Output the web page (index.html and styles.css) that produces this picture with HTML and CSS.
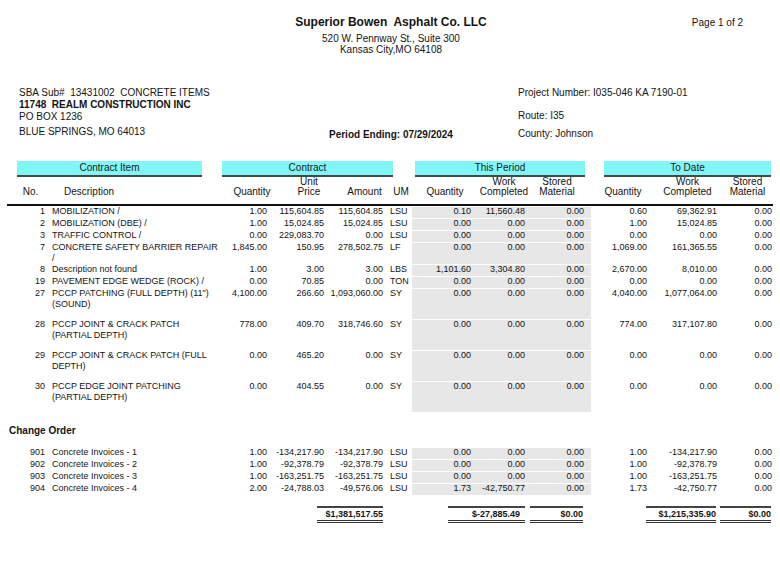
FILE: index.html
```html
<!DOCTYPE html>
<html>
<head>
<meta charset="utf-8">
<link rel="stylesheet" href="styles.css">
</head>
<body>
<div class="page">
  <header class="top">
    <div class="company">
      <div class="company-name">Superior Bowen  Asphalt Co. LLC</div>
      <div class="company-addr">520 W. Pennway St., Suite 300</div>
      <div class="company-addr">Kansas City,MO 64108</div>
    </div>
    <div class="page-num">Page 1 of 2</div>
  </header>

  <section class="info">
    <div class="sub">
      <div class="pre">SBA Sub#  13431002  CONCRETE ITEMS</div>
      <div class="pre bold">11748  REALM CONSTRUCTION INC</div>
      <div>PO BOX 1236</div>
      <div class="city">BLUE SPRINGS, MO 64013</div>
    </div>
    <div class="period">Period Ending: 07/29/2024</div>
    <div class="proj">
      <div>Project Number: I035-046 KA 7190-01</div>
      <div class="route">Route: I35</div>
      <div class="county">County: Johnson</div>
    </div>
  </section>

  <div class="bands">
    <div class="band band-item">Contract Item</div>
    <div class="band band-contract">Contract</div>
    <div class="band band-period">This Period</div>
    <div class="band band-todate">To Date</div>
  </div>

  <table class="grid">
    <colgroup>
      <col class="w-no"><col class="w-desc"><col class="w-qty"><col class="w-unit"><col class="w-amt"><col class="w-um">
      <col class="w-tpq"><col class="w-tpw"><col class="w-tps"><col class="w-tdq"><col class="w-tdw"><col class="w-tds">
    </colgroup>
    <thead>
      <tr>
        <th class="h-no">No.</th>
        <th class="h-desc">Description</th>
        <th class="h-qty">Quantity</th>
        <th class="h-unit">Unit<br>Price</th>
        <th class="h-amt">Amount</th>
        <th class="h-um">UM</th>
        <th class="h-tpq">Quantity</th>
        <th class="h-tpw">Work<br>Completed</th>
        <th class="h-tps">Stored<br>Material</th>
        <th class="h-tdq">Quantity</th>
        <th class="h-tdw">Work<br>Completed</th>
        <th class="h-tds">Stored<br>Material</th>
      </tr>
    </thead>
    <tbody>
      <tr class="r1"><td class="no">1</td><td class="desc">MOBILIZATION /</td><td class="qty">1.00</td><td class="unit">115,604.85</td><td class="amt">115,604.85</td><td class="um">LSU</td><td class="tp tpq">0.10</td><td class="tp tpw">11,560.48</td><td class="tp tps">0.00</td><td class="tdq">0.60</td><td class="tdw">69,362.91</td><td class="tds">0.00</td></tr>
      <tr class="r1"><td class="no">2</td><td class="desc">MOBILIZATION (DBE) /</td><td class="qty">1.00</td><td class="unit">15,024.85</td><td class="amt">15,024.85</td><td class="um">LSU</td><td class="tp tpq">0.00</td><td class="tp tpw">0.00</td><td class="tp tps">0.00</td><td class="tdq">1.00</td><td class="tdw">15,024.85</td><td class="tds">0.00</td></tr>
      <tr class="r1"><td class="no">3</td><td class="desc">TRAFFIC CONTROL /</td><td class="qty">0.00</td><td class="unit">229,083.70</td><td class="amt">0.00</td><td class="um">LSU</td><td class="tp tpq">0.00</td><td class="tp tpw">0.00</td><td class="tp tps">0.00</td><td class="tdq">0.00</td><td class="tdw">0.00</td><td class="tds">0.00</td></tr>
      <tr class="r2"><td class="no">7</td><td class="desc">CONCRETE SAFETY BARRIER REPAIR<br>/</td><td class="qty">1,845.00</td><td class="unit">150.95</td><td class="amt">278,502.75</td><td class="um">LF</td><td class="tp tpq">0.00</td><td class="tp tpw">0.00</td><td class="tp tps">0.00</td><td class="tdq">1,069.00</td><td class="tdw">161,365.55</td><td class="tds">0.00</td></tr>
      <tr class="r1"><td class="no">8</td><td class="desc">Description not found</td><td class="qty">1.00</td><td class="unit">3.00</td><td class="amt">3.00</td><td class="um">LBS</td><td class="tp tpq">1,101.60</td><td class="tp tpw">3,304.80</td><td class="tp tps">0.00</td><td class="tdq">2,670.00</td><td class="tdw">8,010.00</td><td class="tds">0.00</td></tr>
      <tr class="r1"><td class="no">19</td><td class="desc">PAVEMENT EDGE WEDGE (ROCK) /</td><td class="qty">0.00</td><td class="unit">70.85</td><td class="amt">0.00</td><td class="um">TON</td><td class="tp tpq">0.00</td><td class="tp tpw">0.00</td><td class="tp tps">0.00</td><td class="tdq">0.00</td><td class="tdw">0.00</td><td class="tds">0.00</td></tr>
      <tr class="r3"><td class="no">27</td><td class="desc">PCCP PATCHING (FULL DEPTH) (11")<br>(SOUND)</td><td class="qty">4,100.00</td><td class="unit">266.60</td><td class="amt">1,093,060.00</td><td class="um">SY</td><td class="tp tpq">0.00</td><td class="tp tpw">0.00</td><td class="tp tps">0.00</td><td class="tdq">4,040.00</td><td class="tdw">1,077,064.00</td><td class="tds">0.00</td></tr>
      <tr class="r3"><td class="no">28</td><td class="desc">PCCP JOINT &amp; CRACK PATCH<br>(PARTIAL DEPTH)</td><td class="qty">778.00</td><td class="unit">409.70</td><td class="amt">318,746.60</td><td class="um">SY</td><td class="tp tpq">0.00</td><td class="tp tpw">0.00</td><td class="tp tps">0.00</td><td class="tdq">774.00</td><td class="tdw">317,107.80</td><td class="tds">0.00</td></tr>
      <tr class="r3"><td class="no">29</td><td class="desc">PCCP JOINT &amp; CRACK PATCH (FULL<br>DEPTH)</td><td class="qty">0.00</td><td class="unit">465.20</td><td class="amt">0.00</td><td class="um">SY</td><td class="tp tpq">0.00</td><td class="tp tpw">0.00</td><td class="tp tps">0.00</td><td class="tdq">0.00</td><td class="tdw">0.00</td><td class="tds">0.00</td></tr>
      <tr class="r3"><td class="no">30</td><td class="desc">PCCP EDGE JOINT PATCHING<br>(PARTIAL DEPTH)</td><td class="qty">0.00</td><td class="unit">404.55</td><td class="amt">0.00</td><td class="um">SY</td><td class="tp tpq">0.00</td><td class="tp tpw">0.00</td><td class="tp tps">0.00</td><td class="tdq">0.00</td><td class="tdw">0.00</td><td class="tds">0.00</td></tr>
      <tr class="section"><td colspan="12" class="section-title">Change Order</td></tr>
      <tr class="r1"><td class="no">901</td><td class="desc">Concrete Invoices - 1</td><td class="qty">1.00</td><td class="unit">-134,217.90</td><td class="amt">-134,217.90</td><td class="um">LSU</td><td class="tp tpq">0.00</td><td class="tp tpw">0.00</td><td class="tp tps">0.00</td><td class="tdq">1.00</td><td class="tdw">-134,217.90</td><td class="tds">0.00</td></tr>
      <tr class="r1"><td class="no">902</td><td class="desc">Concrete Invoices - 2</td><td class="qty">1.00</td><td class="unit">-92,378.79</td><td class="amt">-92,378.79</td><td class="um">LSU</td><td class="tp tpq">0.00</td><td class="tp tpw">0.00</td><td class="tp tps">0.00</td><td class="tdq">1.00</td><td class="tdw">-92,378.79</td><td class="tds">0.00</td></tr>
      <tr class="r1"><td class="no">903</td><td class="desc">Concrete Invoices - 3</td><td class="qty">1.00</td><td class="unit">-163,251.75</td><td class="amt">-163,251.75</td><td class="um">LSU</td><td class="tp tpq">0.00</td><td class="tp tpw">0.00</td><td class="tp tps">0.00</td><td class="tdq">1.00</td><td class="tdw">-163,251.75</td><td class="tds">0.00</td></tr>
      <tr class="r1"><td class="no">904</td><td class="desc">Concrete Invoices - 4</td><td class="qty">2.00</td><td class="unit">-24,788.03</td><td class="amt">-49,576.06</td><td class="um">LSU</td><td class="tp tpq">1.73</td><td class="tp tpw">-42,750.77</td><td class="tp tps">0.00</td><td class="tdq">1.73</td><td class="tdw">-42,750.77</td><td class="tds">0.00</td></tr>
      <tr class="totals">
        <td colspan="3"></td>
        <td colspan="2" class="t-amt"><span class="tot tot-amt">$1,381,517.55</span></td>
        <td></td>
        <td colspan="2" class="t-tpw"><span class="tot tot-tpw">$-27,885.49</span></td>
        <td class="t-tps"><span class="tot tot-tps">$0.00</span></td>
        <td colspan="2" class="t-tdw"><span class="tot tot-tdw">$1,215,335.90</span></td>
        <td class="t-tds"><span class="tot tot-tds">$0.00</span></td>
      </tr>
    </tbody>
  </table>
</div>
</body>
</html>
```
FILE: styles.css
```css
body {
  margin: 0;
  background: #fff;
  color: #141414;
  font-family: "Liberation Sans", Arial, sans-serif;
}

.page {
  width: 780px;
  height: 561px;
  overflow: hidden;
}

/* ---------- header ---------- */
.top {
  display: grid;
  grid-template-columns: 1fr auto 1fr;
  padding-top: 15px;
  padding-left: 2px;
}
.company {
  grid-column: 2;
  text-align: center;
}
.company-name {
  font-weight: bold;
  font-size: 12px;
  line-height: 14px;
  margin-bottom: 4px;
  white-space: pre;
}
.company-addr {
  font-size: 10px;
  line-height: 11px;
}
.page-num {
  grid-column: 3;
  justify-self: end;
  font-size: 10px;
  line-height: 14px;
  padding-top: 1px;
  padding-right: 37px;
}

/* ---------- info ---------- */
.info {
  display: grid;
  grid-template-columns: 310px 189px 1fr;
  padding-left: 19px;
  margin-top: 32px;
  font-size: 10px;
  line-height: 12px;
}
.pre { white-space: pre; }
.bold { font-weight: bold; }
.city { margin-top: 3px; }
.period {
  font-weight: bold;
  padding-top: 42px;
}
.route { margin-top: 11px; }
.county { margin-top: 6px; }

/* ---------- bands ---------- */
.bands {
  display: flex;
  padding-left: 17px;
  margin-top: 20px;
}
.band {
  background: #80f6f6;
  border-bottom: 2px solid #3d4b4b;
  height: 14px;
  line-height: 13px;
  font-size: 10px;
  text-align: center;
  color: #1a1a1a;
}
.band-item { width: 185px; }
.band-contract { width: 171px; margin-left: 20px; }
.band-period { width: 170px; margin-left: 22px; }
.band-todate { width: 167px; margin-left: 19px; }

/* ---------- table ---------- */
.grid {
  margin-left: 7px;
  width: 766px;
  table-layout: fixed;
  border-collapse: separate;
  border-spacing: 0;
}
.w-no { width: 41px; }
.w-desc { width: 174px; }
.w-qty { width: 51px; }
.w-unit { width: 53px; }
.w-amt { width: 60px; }
.w-um { width: 26px; }
.w-tpq { width: 62px; }
.w-tpw { width: 56px; }
.w-tps { width: 61px; }
.w-tdq { width: 59px; }
.w-tdw { width: 70px; }
.w-tds { width: 53px; }

th {
  font-weight: normal;
  font-size: 10px;
  line-height: 10px;
  vertical-align: bottom;
  text-align: center;
  padding: 0 0 7px 0;
  height: 20px;
  border-bottom: 2px solid #111;
  white-space: nowrap;
}
.h-no { padding-left: 6px; }
.h-desc { text-align: left; padding-left: 16px; }
.h-qty { padding-left: 9px; }
.h-unit { padding-left: 19px; }
.h-amt { padding-left: 17px; }
.h-um { padding-left: 4px; }
.h-tpq { padding-left: 4px; }
.h-tpw { padding-left: 4px; }
.h-tps { padding-right: 7px; }
.h-tdq { padding-left: 5px; }
.h-tdw { padding-left: 5px; }
.h-tds { padding-left: 2px; }

td {
  font-size: 9px;
  line-height: 11px;
  padding: 0;
  vertical-align: top;
  white-space: nowrap;
  text-align: right;
}
.r1 { height: 12px; }
.r2 { height: 22px; }
.r3 { height: 31px; }

.no { padding-right: 3px; }
.desc { text-align: left; padding-left: 4px; }
.qty { padding-right: 6px; }
.unit { padding-right: 2px; }
.amt { padding-right: 3px; }
.um { text-align: left; padding-left: 4px; }
.tpq { padding-right: 3px; }
.tpw { padding-right: 5px; }
.tps { padding-right: 7px; }
.tdq { padding-right: 3px; }
.tdw { padding-right: 3px; }
.tds { padding-right: 1px; }

.tp {
  background: #e7e7e7;
  box-shadow: inset 0 1px 0 #fff;
}

.section { height: 35px; }
.section-title {
  text-align: left;
  font-weight: bold;
  font-size: 10px;
  line-height: 12px;
  padding: 13px 0 0 2px;
}

.totals td {
  padding-top: 11px;
  vertical-align: top;
}
.tot {
  display: inline-block;
  font-weight: bold;
  font-size: 9px;
  line-height: 12px;
  text-align: right;
  border-top: 2px solid #444;
  border-bottom: 3px double #333;
}
.t-amt { padding-right: 3px; }
.tot-amt { width: 66px; }
.t-tpw { padding-right: 5px; }
.tot-tpw { width: 72px; padding-right: 5px; }
.t-tps { padding-right: 8px; }
.tot-tps { width: 53px; }
.t-tdw { padding-right: 4px; }
.tot-tdw { width: 70px; }
.t-tds { padding-right: 2px; }
.tot-tds { width: 51px; }
```
